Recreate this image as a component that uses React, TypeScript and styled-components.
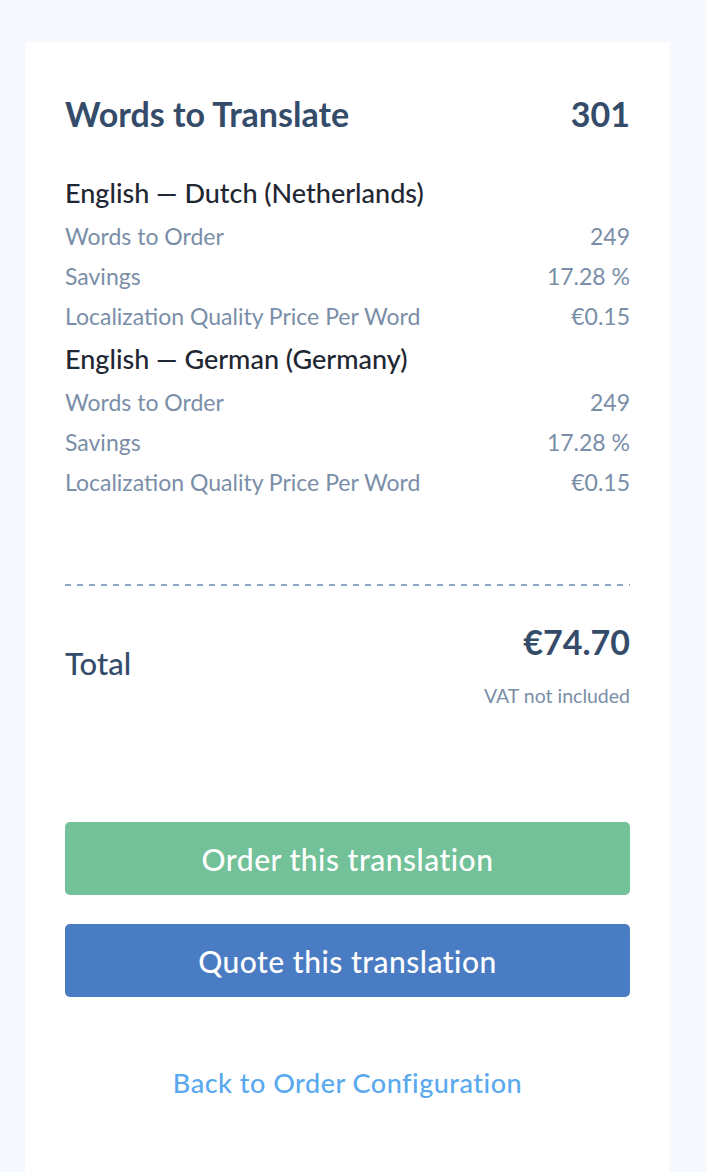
import styled, { createGlobalStyle } from 'styled-components';

const GlobalStyle = createGlobalStyle`
  html, body {
    margin: 0;
    padding: 0;
    background: #f5f9fd;
    font-family: Lato, "Open Sans", sans-serif;
  }
`;

const Page = styled.div`
  min-height: 1172px;
  padding: 42px 36px 0 25px;
  box-sizing: border-box;
  display: flex;
`;

const Card = styled.div`
  flex: 1;
  background: #ffffff;
  padding: 48px 40px 60px 40px;
  display: flex;
  flex-direction: column;
`;

const TitleRow = styled.div`
  display: flex;
  justify-content: space-between;
  align-items: center;
  color: #344c6a;
  font-size: 34px;
  font-weight: 700;
  height: 46px;
  margin-bottom: 34px;
`;

const PairTitle = styled.div`
  color: #1f2733;
  font-size: 27px;
  font-weight: 500;
  height: 44px;
  margin-bottom: 2px;
  display: flex;
  align-items: center;
`;

const Row = styled.div`
  display: flex;
  justify-content: space-between;
  align-items: center;
  height: 40px;
  color: #7a8ea8;
  font-size: 23px;
  font-weight: 400;
`;

const Divider = styled.div`
  height: 2px;
  margin-top: 82px;
  background-image: linear-gradient(to right, #8fa8c2 0 6px, transparent 6px 12px);
  background-size: 12px 2px;
  background-repeat: repeat-x;
`;

const TotalRow = styled.div`
  display: flex;
  justify-content: space-between;
  align-items: flex-start;
  margin-top: 36px;
`;

const TotalLabel = styled.div`
  color: #344c6a;
  font-size: 31px;
  font-weight: 500;
  line-height: 40px;
  margin-top: 21px;
`;

const TotalValue = styled.div`
  display: flex;
  flex-direction: column;
  align-items: flex-end;
  gap: 22px;
`;

const Amount = styled.div`
  color: #344c6a;
  font-size: 34px;
  font-weight: 700;
  line-height: 40px;
`;

const Vat = styled.div`
  color: #7a8ea8;
  font-size: 19.5px;
  line-height: 24px;
`;

const Buttons = styled.div`
  display: flex;
  flex-direction: column;
  gap: 29px;
  margin-top: 114px;
`;

const Button = styled.button<{ $bg: string }>`
  height: 73px;
  border: none;
  border-radius: 5px;
  background: ${(p) => p.$bg};
  color: #ffffff;
  font-family: inherit;
  font-size: 30px;
  font-weight: 500;
  letter-spacing: 0.5px;
  cursor: pointer;
`;

const BackLink = styled.a`
  margin-top: 69px;
  align-self: center;
  color: #5aa9ef;
  font-size: 27px;
  line-height: 33px;
  font-weight: 500;
  letter-spacing: 0.5px;
  text-decoration: none;
  cursor: pointer;
`;

const pairs = [
  { name: 'English — Dutch (Netherlands)', words: '249', savings: '17.28 %', price: '€0.15' },
  { name: 'English — German (Germany)', words: '249', savings: '17.28 %', price: '€0.15' },
];

export default function App() {
  return (
    <>
      <GlobalStyle />
      <Page>
        <Card>
          <TitleRow>
            <span>Words to Translate</span>
            <span>301</span>
          </TitleRow>
          {pairs.map((p) => (
            <div key={p.name}>
              <PairTitle>{p.name}</PairTitle>
              <Row>
                <span>Words to Order</span>
                <span>{p.words}</span>
              </Row>
              <Row>
                <span>Savings</span>
                <span>{p.savings}</span>
              </Row>
              <Row>
                <span>Localization Quality Price Per Word</span>
                <span>{p.price}</span>
              </Row>
            </div>
          ))}
          <Divider />
          <TotalRow>
            <TotalLabel>Total</TotalLabel>
            <TotalValue>
              <Amount>€74.70</Amount>
              <Vat>VAT not included</Vat>
            </TotalValue>
          </TotalRow>
          <Buttons>
            <Button $bg="#72c198">Order this translation</Button>
            <Button $bg="#4a7cc3">Quote this translation</Button>
          </Buttons>
          <BackLink>Back to Order Configuration</BackLink>
        </Card>
      </Page>
    </>
  );
}
